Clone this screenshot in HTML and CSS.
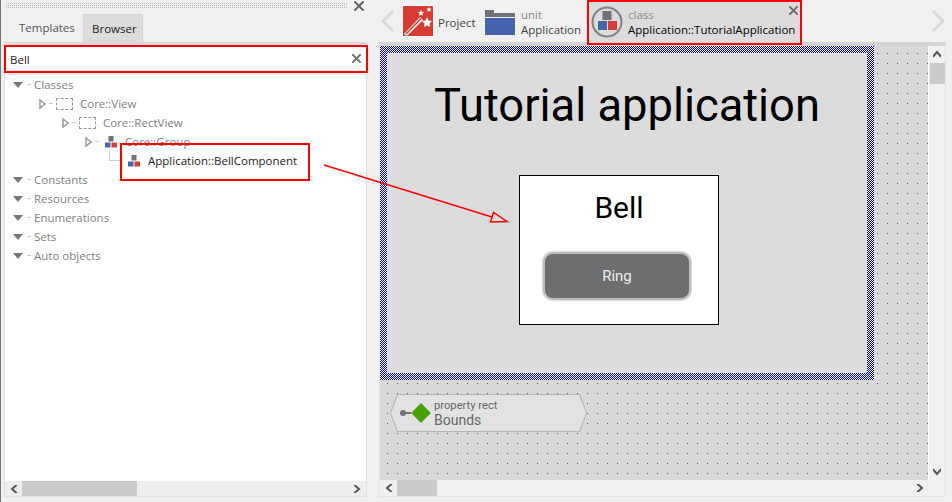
FILE: index.html
```html
<!DOCTYPE html>
<html lang="en">
<head>
    <meta charset="UTF-8">
    <title>Tutorial application</title>
    <link rel="stylesheet" href="styles.css">
</head>
<body>
    <div class="app">
        <aside class="left-pane">
            <div class="grip-row">
                <div class="grip"></div>
                <svg class="close-icon" width="10" height="10" viewBox="0 0 10 10"><path d="M1 1l8 8M9 1l-8 8"/></svg>
            </div>
            <div class="tabs">
                <div class="tab">Templates</div>
                <div class="tab tab-active">Browser</div>
            </div>
            <div class="search">
                <span class="search-text">Bell</span>
                <svg class="close-icon" width="9" height="9" viewBox="0 0 10 10"><path d="M1 1l8 8M9 1l-8 8"/></svg>
            </div>
            <div class="tree-box">
                <ul class="tree">
                    <li class="tree-row"><span class="tri-open"></span><span class="dash"></span>Classes</li>
                    <li class="tree-row depth-1"><svg class="tri-closed" width="7" height="10" viewBox="0 0 7 10"><path d="M1 1l5 4-5 4z"/></svg><span class="dash"></span><span class="dashed-icon"></span>Core::View</li>
                    <li class="tree-row depth-2"><svg class="tri-closed" width="7" height="10" viewBox="0 0 7 10"><path d="M1 1l5 4-5 4z"/></svg><span class="dash"></span><span class="dashed-icon"></span>Core::RectView</li>
                    <li class="tree-row depth-3"><svg class="tri-closed" width="7" height="10" viewBox="0 0 7 10"><path d="M1 1l5 4-5 4z"/></svg><span class="dash"></span>
                        <svg class="tree-icon" width="12" height="12" viewBox="0 0 12 12"><rect x="3.5" width="5" height="5.5" fill="#6f7078"/><rect y="6.5" width="5.5" height="5" fill="#4464ae"/><rect x="6.5" y="6.5" width="5.5" height="5" fill="#dd3c34"/></svg>
                        Core::Group</li>
                    <li class="tree-row depth-4 tree-hit">
                        <span class="elbow"></span>
                        <svg class="tree-icon" width="12" height="12" viewBox="0 0 12 12"><rect x="3.5" width="5" height="5.5" fill="#6f7078"/><rect y="6.5" width="5.5" height="5" fill="#4464ae"/><rect x="6.5" y="6.5" width="5.5" height="5" fill="#dd3c34"/></svg>
                        Application::BellComponent</li>
                    <li class="tree-row"><span class="tri-open"></span><span class="dash"></span>Constants</li>
                    <li class="tree-row"><span class="tri-open"></span><span class="dash"></span>Resources</li>
                    <li class="tree-row"><span class="tri-open"></span><span class="dash"></span>Enumerations</li>
                    <li class="tree-row"><span class="tri-open"></span><span class="dash"></span>Sets</li>
                    <li class="tree-row"><span class="tri-open"></span><span class="dash"></span>Auto objects</li>
                </ul>
                <div class="hscroll">
                    <svg class="arrow" width="8" height="8" viewBox="0 0 8 8"><path d="M6 .5L2 4l4 3.5"/></svg>
                    <div class="thumb thumb-left"></div>
                    <svg class="arrow arrow-end" width="8" height="8" viewBox="0 0 8 8"><path d="M2 .5L6 4 2 7.5"/></svg>
                </div>
            </div>
        </aside>

        <main class="right-pane">
            <div class="crumbs">
                <svg class="nav-arrow" width="14" height="22" viewBox="0 0 14 22"><path d="M12 2L3 11l9 9"/></svg>
                <div class="crumb crumb-project">
                    <svg class="crumb-icon" width="32" height="32" viewBox="0 0 32 32">
                        <rect x=".5" y=".5" width="31" height="31" fill="#d93a32" stroke="#fff"/>
                        <path d="M2 29L18 12l3 3L5 31z" fill="#fff"/>
                        <path d="M4 29L19 13.500" stroke="#d93a32" stroke-width="1.500"/>
                        <path d="M25 12l1.500 3.500 3.500.5-2.500 2.500.5 3.500-3-1.500-3 1.500.5-3.500-2.500-2.500 3.500-.5z" fill="#fff"/>
                        <path d="M19 5l1 2 2 .3-1.500 1.500.3 2-1.800-1-1.800 1 .3-2L16 7.300l2-.3z" fill="#fff"/>
                        <path d="M27 2l.8 1.600 1.700.2-1.200 1.200.3 1.700-1.600-.8-1.600.8.3-1.700-1.200-1.200 1.700-.2z" fill="#fff"/>
                    </svg>
                    <span class="crumb-name crumb-single">Project</span>
                </div>
                <div class="crumb crumb-unit">
                    <svg class="crumb-icon folder-icon" width="30" height="25" viewBox="0 0 30 25">
                        <path d="M0 0h9v3h21v4H0z" fill="#6f7078"/>
                        <rect y="8" width="30" height="17" fill="#4464ae"/>
                    </svg>
                    <div class="crumb-text">
                        <span class="crumb-kind">unit</span>
                        <span class="crumb-name">Application</span>
                    </div>
                </div>
                <div class="crumb crumb-class">
                    <svg class="crumb-icon class-icon" width="32" height="32" viewBox="0 0 32 32">
                        <circle cx="16" cy="16" r="14.500" fill="none" stroke="#808187" stroke-width="2"/>
                        <rect x="11.500" y="5" width="9" height="9" fill="#6f7078"/>
                        <rect x="7" y="15" width="9" height="9" fill="#4464ae"/>
                        <rect x="17" y="15" width="9" height="9" fill="#dd3c34"/>
                    </svg>
                    <div class="crumb-text">
                        <span class="crumb-kind">class</span>
                        <span class="crumb-name crumb-strong">Application::TutorialApplication</span>
                    </div>
                    <svg class="close-icon crumb-close" width="9" height="9" viewBox="0 0 10 10"><path d="M1 1l8 8M9 1l-8 8"/></svg>
                </div>
                <svg class="nav-arrow nav-next" width="14" height="22" viewBox="0 0 14 22"><path d="M2 2l9 9-9 9"/></svg>
            </div>

            <div class="editor">
                <div class="editor-top">
                    <div class="canvas">
                        <div class="stage">
                            <div class="stage-inner">
                                <div class="stage-title">Tutorial application</div>
                                <div class="bell-card">
                                    <div class="bell-title">Bell</div>
                                    <div class="ring-btn">Ring</div>
                                </div>
                            </div>
                        </div>
                        <div class="brick">
                            <div class="brick-fill">
                                <span class="brick-pin"></span>
                                <span class="brick-line"></span>
                                <span class="brick-diamond"></span>
                                <div class="brick-text">
                                    <span class="brick-kind">property rect</span>
                                    <span class="brick-name">Bounds</span>
                                </div>
                            </div>
                        </div>
                    </div>
                    <div class="vscroll">
                        <svg class="arrow" width="8" height="8" viewBox="0 0 8 8"><path d="M.5 6L4 2l3.500 4"/></svg>
                        <div class="thumb thumb-v"></div>
                        <svg class="arrow arrow-end" width="8" height="8" viewBox="0 0 8 8"><path d="M.5 2L4 6l3.500-4"/></svg>
                    </div>
                </div>
                <div class="hscroll hscroll-editor">
                    <svg class="arrow" width="8" height="8" viewBox="0 0 8 8"><path d="M6 .5L2 4l4 3.500"/></svg>
                    <div class="thumb thumb-editor"></div>
                    <svg class="arrow arrow-end" width="8" height="8" viewBox="0 0 8 8"><path d="M2 .5L6 4 2 7.500"/></svg>
                </div>
            </div>
        </main>
    </div>

    <!-- annotations drawn over the screenshot -->
    <div class="mark mark-search"></div>
    <div class="mark mark-tree"></div>
    <div class="mark mark-class"></div>
    <svg class="mark-arrow" width="952" height="502" viewBox="0 0 952 502">
        <path d="M324 165L492 217" fill="none" stroke="#f00" stroke-width="1.500"/>
        <path d="M507 221.500L493.500 212.500l-3 9.500z" fill="#e8e0e0" stroke="#f00" stroke-width="1.500"/>
    </svg>
</body>
</html>
```

FILE: styles.css
```css
html, body {
    margin: 0;
    height: 100%;
    overflow: hidden;
    background-color: #f0f0f0;
    font-family: "Open Sans", sans-serif;
    font-size: 11.5px;
    color: #333;
}
.app {
    display: flex;
    height: 502px;
    border-left: 1px solid #777;
    box-sizing: border-box;
}
.close-icon path, .arrow path, .nav-arrow path {
    fill: none;
    stroke-linecap: square;
}
.close-icon path {
    stroke: #666;
    stroke-width: 2;
}

/* left pane */
.left-pane {
    width: 366px;
    padding-left: 3px;
    box-sizing: border-box;
    display: flex;
    flex-direction: column;
}
.grip-row {
    height: 12px;
    padding-bottom: 2px;
    display: flex;
    align-items: center;
    gap: 6px;
    padding-right: 3px;
}
.grip {
    flex: 1;
    height: 6px;
    margin-left: 2px;
    background-image: conic-gradient(at 1px 1px, transparent 75%, #bbb 0);
    background-size: 2px 2px;
}
.tabs {
    display: flex;
    height: 28px;
    padding-left: 4px;
    border-bottom: 3px solid #d9d9d9;
}
.tab {
    width: 75px;
    box-sizing: border-box;
    padding-left: 11px;
    line-height: 28px;
    color: #555;
}
.tab-active {
    width: 60px;
    background-color: #dcdcdc;
    color: #222;
    border: 1px solid #d4d4d4;
    border-bottom: 0;
    padding-left: 8px;
}
.search {
    height: 23px;
    margin: 2px 0 4px;
    padding: 0 6px 0 6px;
    background-color: #fff;
    display: flex;
    align-items: center;
    justify-content: space-between;
    color: #222;
}
.search-text {
    padding-top: 2px;
}
.tree-box {
    flex: 1;
    margin-bottom: 5px;
    background-color: #fff;
    border: 1px solid #e2e2e2;
    display: flex;
    flex-direction: column;
}
.tree {
    flex: 1;
    list-style: none;
    margin: 0;
    padding: 0 0 0 8px;
}
.tree-row {
    height: 19px;
    display: flex;
    align-items: center;
    color: #7f7f7f;
    white-space: nowrap;
}
.depth-1 { padding-left: 26px; }
.depth-2 { padding-left: 49px; }
.depth-3 { padding-left: 72px; }
.depth-4 { padding-left: 96px; }
.depth-3 .tree-icon { margin-left: 3px; }
.tree-hit { color: #222; }
.tri-open {
    width: 0;
    height: 0;
    border-left: 5px solid transparent;
    border-right: 5px solid transparent;
    border-top: 6px solid #777;
}
.tri-closed {
    flex: none;
    margin-right: -1px;
}
.tri-closed path {
    fill: #fff;
    stroke: #999;
    stroke-width: 1.5;
}
.dash {
    width: 4px;
    height: 1px;
    margin: 0 3px 0 4px;
    background-color: #ccc;
}
.dashed-icon {
    width: 15px;
    height: 10px;
    margin-right: 7px;
    border: 1px dashed #999;
}
.tree-icon {
    flex: none;
    margin-right: 8px;
}
.elbow {
    align-self: flex-start;
    width: 13px;
    height: 9px;
    margin-right: 5px;
    border-left: 1px solid #ccc;
    border-bottom: 1px solid #ccc;
}
.hscroll {
    height: 15px;
    display: flex;
    align-items: center;
    background-color: #eee;
}
.thumb {
    background-color: #cbcbcb;
}
.thumb-left {
    width: 115px;
    height: 15px;
    margin-left: 4px;
}
.arrow {
    flex: none;
    margin-left: 5px;
}
.arrow path {
    stroke: #555;
    stroke-width: 2;
}
.arrow-end {
    margin-left: auto;
    margin-right: 5px;
}

/* right pane */
.right-pane {
    flex: 1;
    min-width: 0;
    display: flex;
    flex-direction: column;
    padding: 0 6px 5px 12px;
}
.crumbs {
    height: 42px;
    display: flex;
    align-items: center;
    flex: none;
}
.nav-arrow {
    flex: none;
    margin-left: 1px;
}
.nav-arrow path {
    stroke: #d8d8d8;
    stroke-width: 3;
}
.nav-next {
    margin-left: auto;
}
.crumb {
    display: flex;
    align-items: center;
    flex: none;
    height: 42px;
    box-sizing: border-box;
}
.crumb-icon {
    flex: none;
}
.folder-icon {
    margin-top: 3px;
}
.class-icon {
    margin-top: 2px;
}
.crumb-project {
    width: 74px;
    margin-left: 8px;
    gap: 4px;
}
.crumb-unit {
    width: 97px;
    margin-left: 9px;
    gap: 6px;
}
.crumb-class {
    position: relative;
    width: 215px;
    margin-left: 5px;
    padding-left: 4px;
    gap: 5px;
    background-color: #dcdcdc;
}
.crumb-close {
    position: absolute;
    top: 6px;
    right: 4px;
}
.crumb-text {
    display: flex;
    flex-direction: column;
    line-height: 15px;
    margin-top: 2px;
}
.crumb-single {
    margin-top: 2px;
}
.crumb-kind {
    color: #8a8a8a;
}
.crumb-name {
    color: #444;
    white-space: nowrap;
}
.crumb-strong {
    color: #000;
}
.editor {
    flex: 1;
    min-height: 0;
    display: flex;
    flex-direction: column;
    border-top: 4px solid #d4d4d4;
    border-right: 1px solid #e4e4e4;
    border-bottom: 1px solid #e4e4e4;
    border-left: 1px solid #e4e4e4;
}
.editor-top {
    flex: 1;
    min-height: 0;
    display: flex;
}
.canvas {
    flex: 1;
    min-width: 0;
    overflow: hidden;
    background-color: #d8d8d8;
    background-image: conic-gradient(at 1px 1px, transparent 75%, #555 0);
    background-size: 10px 10px;
    background-position: 7px 7px;
    border-right: 1px solid #fff;
}
.stage {
    width: 494px;
    height: 334px;
    padding: 7px;
    box-sizing: border-box;
    background-image: repeating-conic-gradient(#0000d8 0 25%, #fff 0 50%);
    background-size: 2px 2px;
}
.stage-inner {
    height: 100%;
    background-color: #dcdcdc;
    display: flex;
    flex-direction: column;
    align-items: center;
}
.stage-title {
    font-family: Roboto, sans-serif;
    font-size: 45.3px;
    line-height: 56px;
    margin-top: 25px;
    color: #000;
}
.bell-card {
    width: 200px;
    height: 150px;
    margin-top: 41px;
    margin-right: 16px;
    box-sizing: border-box;
    background-color: #fff;
    border: 1px solid #000;
    display: flex;
    flex-direction: column;
    align-items: center;
}
.bell-title {
    font-family: Roboto, sans-serif;
    font-size: 30px;
    line-height: 38px;
    margin-top: 13px;
    color: #000;
}
.ring-btn {
    width: 148px;
    height: 48px;
    margin-top: 25px;
    margin-right: 4px;
    box-sizing: border-box;
    background-color: #6d6e70;
    border: 2px solid #bdbdbd;
    box-shadow: 0 0 1px 1px #d8d8d8;
    border-radius: 10px;
    font-family: Roboto, sans-serif;
    font-size: 15px;
    line-height: 44px;
    text-align: center;
    color: #eee;
}
.brick {
    width: 197px;
    height: 38px;
    margin: 14px 0 0 10px;
    padding: 1px;
    box-sizing: border-box;
    background-color: #b4b4b4;
    clip-path: polygon(7px 0, 190px 0, 100% 50%, 190px 100%, 7px 100%, 0 50%);
}
.brick-fill {
    height: 100%;
    display: flex;
    align-items: center;
    background-color: #e2e2e2;
    clip-path: polygon(7px 0, 188px 0, 100% 50%, 188px 100%, 7px 100%, 0 50%);
}
.brick-pin {
    width: 6px;
    height: 6px;
    margin-left: 9px;
    border-radius: 50%;
    background-color: #6f7078;
    flex: none;
}
.brick-line {
    width: 5px;
    height: 2px;
    background-color: #6f7078;
    flex: none;
}
.brick-diamond {
    width: 14px;
    height: 14px;
    margin-left: 3px;
    transform: rotate(45deg);
    background-color: #46a206;
    flex: none;
}
.brick-text {
    display: flex;
    flex-direction: column;
    margin-left: 6px;
    padding-top: 2px;
    font-family: Roboto, sans-serif;
    color: #666;
}
.brick-kind {
    font-size: 11.2px;
    line-height: 12px;
}
.brick-name {
    font-size: 14px;
    line-height: 17px;
}
.vscroll {
    width: 16px;
    flex: none;
    display: flex;
    flex-direction: column;
    align-items: center;
    background-color: #f0f0f0;
}
.vscroll .arrow {
    margin: 4px 0 0;
}
.vscroll .arrow-end {
    margin: auto 0 4px;
}
.thumb-v {
    width: 15px;
    height: 21px;
    margin-top: 5px;
}
.hscroll-editor {
    height: 16px;
    background-color: #f0f0f0;
    flex: none;
    padding-right: 16px;
}
.thumb-editor {
    width: 40px;
    height: 16px;
    margin-left: 4px;
}

/* red annotations */
.mark {
    position: absolute;
    box-sizing: border-box;
    border: 2px solid #f00;
}
.mark-search {
    left: 4px;
    top: 45px;
    width: 364px;
    height: 28px;
}
.mark-tree {
    left: 120px;
    top: 143px;
    width: 190px;
    height: 38px;
}
.mark-class {
    left: 587px;
    top: 0;
    width: 215px;
    height: 45px;
}
.mark-arrow {
    position: absolute;
    left: 0;
    top: 0;
}
```
